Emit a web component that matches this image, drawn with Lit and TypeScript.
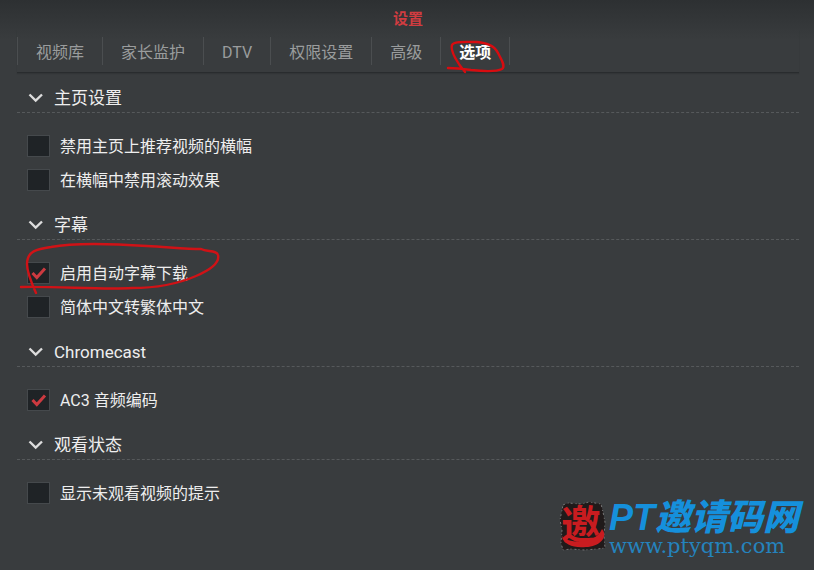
import { LitElement, html, css, svg, nothing } from "lit";
import { customElement, property, state } from "lit/decorators.js";

interface Option {
  id: string;
  label: string;
  checked: boolean;
  circled?: boolean;
}

interface Group {
  title: string;
  options: Option[];
}

const TABS = ["视频库", "家长监护", "DTV", "权限设置", "高级", "选项"];

const GROUPS: Group[] = [
  {
    title: "主页设置",
    options: [
      { id: "hide-banner", label: "禁用主页上推荐视频的横幅", checked: false },
      { id: "no-scroll", label: "在横幅中禁用滚动效果", checked: false },
    ],
  },
  {
    title: "字幕",
    options: [
      { id: "auto-subs", label: "启用自动字幕下载", checked: true, circled: true },
      { id: "s2t", label: "简体中文转繁体中文", checked: false },
    ],
  },
  {
    title: "Chromecast",
    options: [{ id: "ac3", label: "AC3 音频编码", checked: true }],
  },
  {
    title: "观看状态",
    options: [{ id: "unwatched", label: "显示未观看视频的提示", checked: false }],
  },
];

@customElement("option-row")
class OptionRow extends LitElement {
  @property({ attribute: false }) option!: Option;

  static styles = css`
    :host {
      display: block;
      position: relative;
    }
    .row {
      display: flex;
      align-items: center;
      gap: 10px;
      height: 22px;
      margin-left: 10px;
    }
    .box {
      position: relative;
      width: 23px;
      height: 22px;
      flex: none;
    }
    .input {
      appearance: none;
      display: block;
      box-sizing: border-box;
      width: 100%;
      height: 100%;
      margin: 0;
      background: #1f2326;
      border: 1px solid #45494c;
    }
    .tick {
      position: absolute;
      inset: 0;
      width: 100%;
      height: 100%;
      visibility: hidden;
      pointer-events: none;
    }
    .input:checked + .tick {
      visibility: visible;
    }
    .label {
      font-size: 16px;
      line-height: 22px;
      padding-top: 2px;
      color: #eeeeee;
    }
    .ink {
      position: absolute;
      left: 0;
      top: -22px;
      width: 210px;
      height: 60px;
      pointer-events: none;
    }
  `;

  render() {
    const o = this.option;
    return html`<div class="row">
        <span class="box">
          <input class="input" type="checkbox" id=${o.id} .checked=${o.checked} />
          <svg class="tick" viewBox="0 0 23 22">
            <path d="M5.5 11 L9.8 15.5 L18 6.5" fill="none" stroke="#cc3a40" stroke-width="3" />
          </svg>
        </span>
        <label class="label" for=${o.id}>${o.label}</label>
      </div>
      ${o.circled
        ? html`<svg class="ink" viewBox="0 0 210 60">
            <path
              d="M19 53 C15 44 10 33 10 24 C10 11 20 9 34 7 C60 2 100 4 130 6 C150 7 170 9 184 9 C190 12 200 10 201 15 C203 23 193 30 179 36 C163 43 140 48 115 48 C85 50 40 46 4 47"
              fill="none" stroke="#d01216" stroke-width="2.4" stroke-linecap="round" stroke-linejoin="round"
            />
          </svg>`
        : nothing}`;
  }
}

@customElement("option-group")
class OptionGroup extends LitElement {
  @property({ attribute: false }) group!: Group;
  @state() private open = true;

  static styles = css`
    :host {
      display: block;
    }
    .title {
      margin: 0;
      font-size: 17px;
      font-weight: 400;
      border-bottom: 1px dashed #56595b;
    }
    .toggle {
      display: flex;
      align-items: center;
      gap: 10px;
      width: 100%;
      height: 28px;
      padding: 0 0 0 11px;
      border: 0;
      background: none;
      color: #eeeeee;
      font: inherit;
      line-height: 20px;
      text-align: left;
    }
    .chevron {
      width: 16px;
      height: 10px;
    }
    .list {
      display: grid;
      gap: 12px;
      padding-top: 22px;
    }
  `;

  render() {
    return html`<h2 class="title">
        <button class="toggle" aria-expanded=${this.open} @click=${() => (this.open = !this.open)}>
          <svg class="chevron" viewBox="0 0 16 10">
            <path d="M1.5 1.5 L7.7 7.5 L14 1.5" fill="none" stroke="#dddddd" stroke-width="2.4" />
          </svg>
          ${this.group.title}
        </button>
      </h2>
      ${this.open
        ? html`<div class="list">
            ${this.group.options.map((o) => html`<option-row .option=${o}></option-row>`)}
          </div>`
        : nothing}`;
  }
}

@customElement("site-mark")
class SiteMark extends LitElement {
  static styles = css`
    :host {
      display: flex;
      gap: 2px;
      color: #1590dc;
    }
    .seal {
      width: 48px;
      height: 54px;
      overflow: visible;
    }
    .glyph {
      font: 700 40px "Noto Sans CJK SC", sans-serif;
      fill: #c91c20;
    }
    .name {
      font: italic 900 36px/36px "Liberation Sans", "Noto Sans CJK SC", sans-serif;
      white-space: nowrap;
    }
    .site {
      display: block;
      font: 21px/20px "DejaVu Serif", serif;
      color: #2583bd;
      text-decoration: none;
    }
  `;

  render() {
    return html`<svg class="seal" viewBox="0 0 48 54">
        ${svg`<path d="M4 5 L9 3 L22 4 L30 2 L42 4 L44 12 L46 22 L45 36 L46 48 L38 49 L25 50 L12 49 L4 50 L2 43 L3 30 L1 20 Z"
          fill="#201a1a" stroke="#777777" stroke-width="1" stroke-dasharray="2 3 1 2" />
        <text class="glyph" x="2" y="39">邀</text>
        <path d="M3 36 C10 44 36 45 43 29 C50 37 40 47 27 47 C14 48 5 45 3 36 Z" fill="#c91c20" />`}
      </svg>
      <div>
        <div class="name">PT邀请码网</div>
        <a class="site" href="#">www.ptyqm.com</a>
      </div>`;
  }
}

@customElement("app-root")
class AppRoot extends LitElement {
  @state() private active = 5;

  static styles = css`
    :host {
      display: block;
      position: relative;
      box-sizing: border-box;
      min-height: 100vh;
      padding: 8px 15px 20px 17px;
      background: linear-gradient(#2d3032, #393c3e 40px);
      font-family: Roboto, "Noto Sans CJK SC", sans-serif;
    }
    .heading {
      margin: 0;
      font-size: 15px;
      line-height: 22px;
      font-weight: 700;
      text-align: center;
      color: #d03c40;
    }
    .tabs {
      display: flex;
      height: 43px;
      align-items: flex-start;
      padding-top: 7px;
      box-sizing: border-box;
      border-bottom: 1px solid #292c2e;
      box-shadow: 0 1px 1px #323537;
    }
    .tab {
      position: relative;
      height: 28px;
      padding: 2px 18px 0;
      border: 0;
      border-left: 1px solid #4b4e50;
      background: none;
      color: #9a9c9d;
      font: inherit;
      font-size: 16px;
      line-height: 28px;
      white-space: nowrap;
    }
    .tab:last-child {
      border-right: 1px solid #4b4e50;
    }
    .active {
      color: #ffffff;
      font-weight: 700;
    }
    .ink {
      position: absolute;
      left: 5px;
      top: 0;
      width: 62px;
      height: 38px;
      pointer-events: none;
    }
    .groups {
      display: grid;
      gap: 20px;
      padding-top: 11px;
    }
    .mark {
      position: absolute;
      right: 15px;
      bottom: 14px;
    }
  `;

  render() {
    return html`<h1 class="heading">设置</h1>
      <nav class="tabs">
        ${TABS.map(
          (t, i) => html`<button
            class=${i === this.active ? "tab active" : "tab"}
            @click=${() => (this.active = i)}
          >${t}${i === TABS.length - 1
              ? html`<svg class="ink" viewBox="0 0 62 38">
                  <path d="M19 35 C12 27 4 14 6 8 C8 4 20 5 31 5 C40 6 48 8 52 16 C55 22 60 29 56 32 C50 35 34 34 25 33 C18 32 10 31 2 31"
                    fill="none" stroke="#d80c10" stroke-width="2.4" stroke-linecap="round" stroke-linejoin="round" />
                </svg>`
              : nothing}</button>`
        )}
      </nav>
      <main class="groups">
        ${GROUPS.map((g) => html`<option-group .group=${g}></option-group>`)}
      </main>
      <site-mark class="mark"></site-mark>`;
  }
}
